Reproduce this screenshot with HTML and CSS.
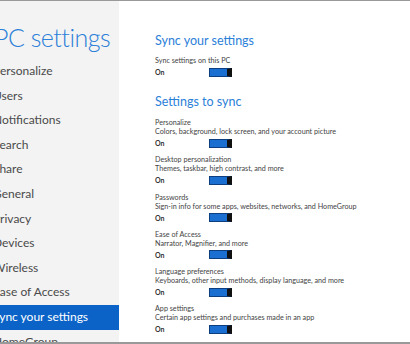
FILE: index.html
```html
<!DOCTYPE html>
<html lang="en">
	<head>
		<meta charset="UTF-8" />
		<title>PC settings</title>
		<link rel="stylesheet" href="styles.css">
	</head>
	<body>
		<div class="screen">
			<div class="sidebar">
				<h1>PC settings</h1>
				<ul class="nav">
					<li>Personalize</li>
					<li>Users</li>
					<li>Notifications</li>
					<li>Search</li>
					<li>Share</li>
					<li>General</li>
					<li>Privacy</li>
					<li>Devices</li>
					<li>Wireless</li>
					<li>Ease of Access</li>
					<li class="active">Sync your settings</li>
					<li>HomeGroup</li>
				</ul>
			</div>

			<div class="content">
				<h2>Sync your settings</h2>
				<div class="setting">
					<p class="name">Sync settings on this PC</p>
					<div class="state"><span>On</span><div class="toggle"></div></div>
				</div>

				<h2>Settings to sync</h2>
				<div class="setting">
					<p class="name">Personalize</p>
					<p class="desc">Colors, background, lock screen, and your account picture</p>
					<div class="state"><span>On</span><div class="toggle"></div></div>
				</div>
				<div class="setting">
					<p class="name">Desktop personalization</p>
					<p class="desc">Themes, taskbar, high contrast, and more</p>
					<div class="state"><span>On</span><div class="toggle"></div></div>
				</div>
				<div class="setting">
					<p class="name">Passwords</p>
					<p class="desc">Sign-in info for some apps, websites, networks, and HomeGroup</p>
					<div class="state"><span>On</span><div class="toggle"></div></div>
				</div>
				<div class="setting">
					<p class="name">Ease of Access</p>
					<p class="desc">Narrator, Magnifier, and more</p>
					<div class="state"><span>On</span><div class="toggle"></div></div>
				</div>
				<div class="setting">
					<p class="name">Language preferences</p>
					<p class="desc">Keyboards, other input methods, display language, and more</p>
					<div class="state"><span>On</span><div class="toggle"></div></div>
				</div>
				<div class="setting">
					<p class="name">App settings</p>
					<p class="desc">Certain app settings and purchases made in an app</p>
					<div class="state"><span>On</span><div class="toggle"></div></div>
				</div>
				<div class="setting">
					<p class="name">Browser</p>
					<p class="desc">Favorites and history</p>
				</div>
			</div>
		</div>
	</body>
</html>
```

FILE: styles.css
```css
body,
h1,
h2,
p,
ul {
	margin: 0;
	padding: 0;
	font-family: Lato, "Open Sans", sans-serif;
}

body {
	background-color: #ffffff;
	overflow: hidden;
}

.screen {
	display: flex;
	height: 344px;
	box-sizing: border-box;
	border-top: 1px solid #999999;
	border-bottom: 2px solid #999999;
	overflow: hidden;
}

.sidebar {
	width: 119px;
	flex-shrink: 0;
	background-color: #f3f3f3;
	overflow: hidden;
}

.sidebar h1 {
	margin: 18px 0 0 -6px;
	font-size: 25px;
	font-weight: 300;
	line-height: 36px;
	letter-spacing: -0.5px;
	color: #2b80d8;
	white-space: nowrap;
}

.nav {
	list-style: none;
	margin: 4px 0 0 -7px;
}

.nav li {
	height: 24.6px;
	line-height: 24px;
	font-size: 12px;
	color: #4a4a4a;
	white-space: nowrap;
}

.nav li.active {
	margin-left: -20px;
	padding-left: 20px;
	background-color: #0b63c8;
	color: #ffffff;
}

.content {
	flex: 1;
	padding: 31px 0 0 36px;
	white-space: nowrap;
}

.content h2 {
	font-size: 12.5px;
	font-weight: 400;
	line-height: 18px;
	color: #2b80d8;
	margin-bottom: 6px;
}

.setting {
	margin-bottom: 6.3px;
}

.setting + h2 {
	margin-top: 15px;
	margin-bottom: 7px;
}

.name,
.desc {
	font-size: 7.2px;
	line-height: 9px;
	color: #444444;
}

.state {
	display: flex;
	align-items: center;
	height: 12px;
	margin-top: 1px;
}

.state span {
	width: 54px;
	font-size: 7px;
	font-weight: 700;
	color: #333333;
}

.toggle {
	width: 17px;
	height: 7px;
	background-color: #1a6fd1;
	border: 1px solid #0d3f80;
	border-right: 5px solid #111111;
}
```
